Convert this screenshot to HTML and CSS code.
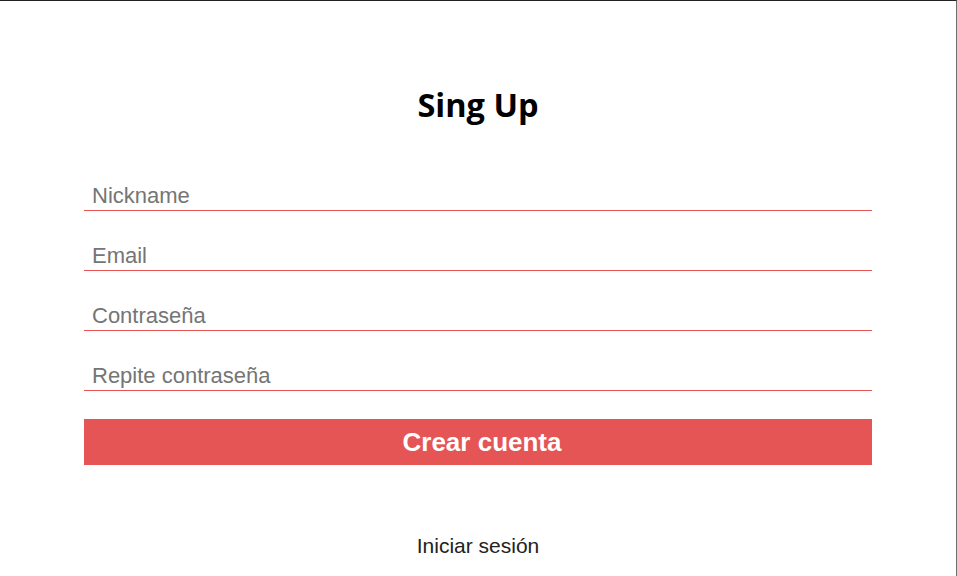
FILE: index.html
```html
<!DOCTYPE html>
<html lang="es">
<head>
<meta charset="utf-8">
<title>Sing Up</title>
<link rel="stylesheet" href="styles.css">
</head>
<body>
<div class="frame">
  <h1 class="title">Sing Up</h1>
  <form class="form">
    <input class="field" type="text" placeholder="Nickname">
    <input class="field" type="email" placeholder="Email">
    <input class="field" type="password" placeholder="Contraseña">
    <input class="field" type="password" placeholder="Repite contraseña">
    <button class="submit" type="button">Crear cuenta</button>
  </form>
  <a class="login" href="#">Iniciar sesión</a>
</div>
</body>
</html>
```

FILE: styles.css
```css
html, body {
  margin: 0;
  padding: 0;
  background: #fff;
}
.frame {
  box-sizing: border-box;
  width: 957px;
  height: 576px;
  border-top: 1px solid #222;
  border-right: 1px solid #6e6e6e;
  display: flex;
  flex-direction: column;
  align-items: center;
  font-family: "Liberation Sans", Arial, sans-serif;
}
.title {
  margin: 86px 0 0 0;
  height: 36px;
  line-height: 36px;
  font-family: "Open Sans", "DejaVu Sans", sans-serif;
  font-weight: 700;
  font-size: 32.5px;
  color: #000;
}
.form {
  width: 788px;
  margin-top: 57px;
  display: flex;
  flex-direction: column;
}
.field {
  box-sizing: border-box;
  height: 31px;
  margin: 0 0 29px 0;
  padding: 2px 8px 0 8px;
  border: none;
  border-bottom: 1px solid #e55353;
  outline: none;
  font-family: "Liberation Sans", Arial, sans-serif;
  font-size: 22px;
  color: #333;
  background: transparent;
}
.field:nth-of-type(4) {
  margin-bottom: 28px;
}
.field::placeholder {
  color: #757575;
}
.submit {
  height: 46px;
  border: none;
  background: #e55555;
  color: #fff;
  font-family: "Liberation Sans", Arial, sans-serif;
  font-weight: 700;
  font-size: 26px;
  padding: 0 0 0 8px;
}
.login {
  margin-top: 69px;
  font-size: 21px;
  color: #222;
  text-decoration: none;
}
```
